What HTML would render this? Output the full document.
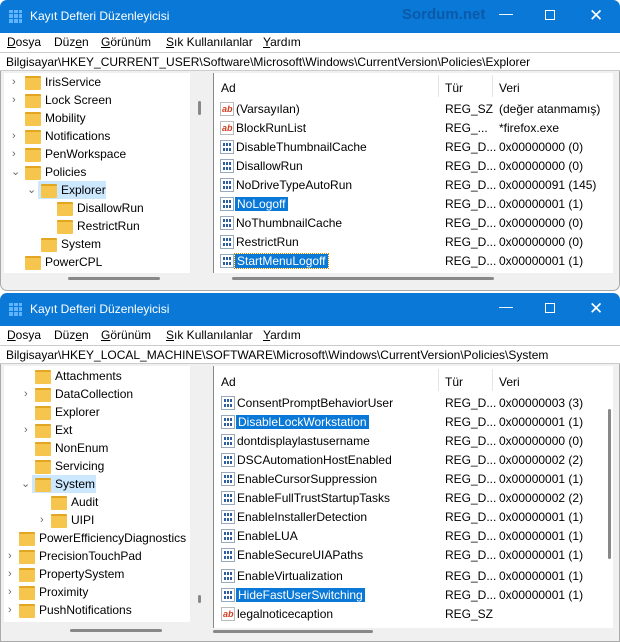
<!DOCTYPE html>
<html><head><meta charset="utf-8"><style>
*{margin:0;padding:0;box-sizing:border-box}
body{width:620px;height:642px;background:#fff;position:relative;overflow:hidden;font-family:"Liberation Sans","DejaVu Sans",sans-serif;font-size:12px;color:#000}
.a{position:absolute;white-space:nowrap;line-height:18px}
.title{position:absolute;left:0;width:620px;height:33px;background:#0a78d7;color:#fff;border-radius:7px 7px 0 0}
.title .tx{position:absolute;left:30px;top:9px;font-size:12px}
.title .ic{position:absolute;left:9px;top:10px;width:13px;height:13px;background:
linear-gradient(90deg,transparent 4px,#0a78d7 4px,#0a78d7 5px,transparent 5px,transparent 9px,#0a78d7 9px,#0a78d7 10px,transparent 10px),
linear-gradient(0deg,transparent 4px,#0a78d7 4px,#0a78d7 5px,transparent 5px,transparent 9px,#0a78d7 9px,#0a78d7 10px,transparent 10px),#5fb3ff}
.title .sd{position:absolute;left:402px;top:6px;font-weight:bold;font-size:15px;color:#0b5aa8}
.menu{position:absolute;left:0;width:620px;height:19px;background:#fff}
.menu span{position:absolute;top:2px}
.addr{position:absolute;left:0;width:620px;height:19px;border-top:1px solid #ccc;border-bottom:1px solid #ccc;background:#fff}
.addr span{position:absolute;left:6px;top:2px}
.panes{position:absolute;left:0;width:620px;background:#f0f0f0;border:1px solid #aaa;border-top:none;border-radius:0 0 7px 7px}
.lp{position:absolute;background:#fff}
.rp{position:absolute;background:#fff;border-left:1px solid #888}
.f::before{content:"";position:absolute;left:-20px;top:3px;width:16px;height:12px;background:#f6c54e;border-top:2px solid #e3a623;border-radius:1px}
.sel{background:#cce8ff}
.chev{position:absolute;color:#666;font-size:11px;line-height:18px}
.ico{position:absolute;left:-16px;top:2px;width:14px;height:14px;line-height:0;font-size:0}
.sz .ico{border:1px solid #bbb;background:#fff}
.sz .ico::after{content:"ab";position:absolute;left:1px;top:6px;font-size:9px;font-weight:bold;color:#d23b1f;line-height:0}
.dw .ico{border:1px solid #9ab;background:#fff}
.dw .ico::after{content:"";position:absolute;left:2px;top:2px;width:9px;height:3px;background:repeating-linear-gradient(90deg,#2c5d9c 0 2px,#fff 2px 3px)}
.dw .ico::before{content:"";position:absolute;left:2px;top:7px;width:9px;height:3px;background:repeating-linear-gradient(90deg,#2c5d9c 0 2px,#fff 2px 3px)}
.hl{background:#0a78d7;color:#fff;padding:0 2px;margin-left:-1px}
.hbar{position:absolute;height:3px;background:#888;border-radius:2px}
.vbar{position:absolute;width:3px;background:#888;border-radius:2px}
.btn{position:absolute;top:9px;color:#fff;font-size:14px}
</style></head><body>

<!-- WINDOW 1 -->
<div class="title" style="top:0"><div class="ic"></div><div class="tx">Kayıt Defteri Düzenleyicisi</div><div class="sd">Sordum.net</div>
<div class="btn" style="left:499px;top:5px">—</div>
<div style="position:absolute;left:545px;top:10px;width:10px;height:10px;border:1px solid #fff"></div>
<div class="btn" style="left:589px;top:6px;font-size:17px">✕</div></div>
<div class="menu" style="top:33px"><span style="left:7px"><u>D</u>osya</span><span style="left:54px">Düz<u>e</u>n</span><span style="left:101px"><u>G</u>örünüm</span><span style="left:166px"><u>S</u>ık Kullanılanlar</span><span style="left:263px"><u>Y</u>ardım</span></div>
<div class="addr" style="top:52px"><span>Bilgisayar\HKEY_CURRENT_USER\Software\Microsoft\Windows\CurrentVersion\Policies\Explorer</span></div>
<div class="panes" style="top:71px;height:220px">
<div class="lp" style="left:3px;top:2px;width:186px;height:200px"></div>
<div class="vbar" style="left:197px;top:30px;height:14px"></div>
<div class="hbar" style="left:67px;top:206px;width:92px"></div>
<div class="rp" style="left:212px;top:2px;width:400px;height:200px"></div>
<div class="hbar" style="left:231px;top:206px;width:262px"></div>
</div>
<div class="chev" style="left:12px;top:73px">›</div><div class="a f" style="left:45px;top:73px">IrisService</div>
<div class="chev" style="left:12px;top:91px">›</div><div class="a f" style="left:45px;top:91px">Lock Screen</div>
<div class="a f" style="left:45px;top:109px">Mobility</div>
<div class="chev" style="left:12px;top:127px">›</div><div class="a f" style="left:45px;top:127px">Notifications</div>
<div class="chev" style="left:12px;top:145px">›</div><div class="a f" style="left:45px;top:145px">PenWorkspace</div>
<div class="chev" style="left:11px;top:163px">⌄</div><div class="a f" style="left:45px;top:163px">Policies</div>
<div class="sel" style="position:absolute;left:38px;top:181px;width:68px;height:18px"></div>
<div class="chev" style="left:27px;top:181px">⌄</div><div class="a f" style="left:61px;top:181px">Explorer</div>
<div class="a f" style="left:77px;top:199px">DisallowRun</div>
<div class="a f" style="left:77px;top:217px">RestrictRun</div>
<div class="a f" style="left:61px;top:235px">System</div>
<div class="a f" style="left:45px;top:253px">PowerCPL</div>

<div class="a" style="left:221px;top:79px">Ad</div><div class="a" style="left:445px;top:79px">Tür</div><div class="a" style="left:499px;top:79px">Veri</div>
<div style="position:absolute;left:438px;top:75px;width:1px;height:22px;background:#e5e5e5"></div>
<div style="position:absolute;left:492px;top:75px;width:1px;height:22px;background:#e5e5e5"></div>

<div class="a sz" style="left:236px;top:100px"><i class="ico"></i>(Varsayılan)</div><div class="a" style="left:445px;top:100px">REG_SZ</div><div class="a" style="left:499px;top:100px">(değer atanmamış)</div>
<div class="a sz" style="left:236px;top:119px"><i class="ico"></i>BlockRunList</div><div class="a" style="left:445px;top:119px">REG_...</div><div class="a" style="left:499px;top:119px">*firefox.exe</div>
<div class="a dw" style="left:236px;top:138px"><i class="ico"></i>DisableThumbnailCache</div><div class="a" style="left:445px;top:138px">REG_D...</div><div class="a" style="left:499px;top:138px">0x00000000 (0)</div>
<div class="a dw" style="left:236px;top:157px"><i class="ico"></i>DisallowRun</div><div class="a" style="left:445px;top:157px">REG_D...</div><div class="a" style="left:499px;top:157px">0x00000000 (0)</div>
<div class="a dw" style="left:236px;top:176px"><i class="ico"></i>NoDriveTypeAutoRun</div><div class="a" style="left:445px;top:176px">REG_D...</div><div class="a" style="left:499px;top:176px">0x00000091 (145)</div>
<div class="a dw" style="left:236px;top:195px"><i class="ico"></i><span class="hl">NoLogoff</span></div><div class="a" style="left:445px;top:195px">REG_D...</div><div class="a" style="left:499px;top:195px">0x00000001 (1)</div>
<div class="a dw" style="left:236px;top:214px"><i class="ico"></i>NoThumbnailCache</div><div class="a" style="left:445px;top:214px">REG_D...</div><div class="a" style="left:499px;top:214px">0x00000000 (0)</div>
<div class="a dw" style="left:236px;top:233px"><i class="ico"></i>RestrictRun</div><div class="a" style="left:445px;top:233px">REG_D...</div><div class="a" style="left:499px;top:233px">0x00000000 (0)</div>
<div class="a dw" style="left:236px;top:252px"><i class="ico"></i><span class="hl" style="outline:1px dotted #c80">StartMenuLogoff</span></div><div class="a" style="left:445px;top:252px">REG_D...</div><div class="a" style="left:499px;top:252px">0x00000001 (1)</div>

<!-- WINDOW 2 -->
<div class="title" style="top:293px"><div class="ic"></div><div class="tx">Kayıt Defteri Düzenleyicisi</div>
<div class="btn" style="left:499px;top:5px">—</div>
<div style="position:absolute;left:545px;top:10px;width:10px;height:10px;border:1px solid #fff"></div>
<div class="btn" style="left:589px;top:6px;font-size:17px">✕</div></div>
<div class="menu" style="top:326px"><span style="left:7px"><u>D</u>osya</span><span style="left:54px">Düz<u>e</u>n</span><span style="left:101px"><u>G</u>örünüm</span><span style="left:166px"><u>S</u>ık Kullanılanlar</span><span style="left:263px"><u>Y</u>ardım</span></div>
<div class="addr" style="top:345px"><span>Bilgisayar\HKEY_LOCAL_MACHINE\SOFTWARE\Microsoft\Windows\CurrentVersion\Policies\System</span></div>
<div class="panes" style="top:364px;height:278px;border-radius:0">
<div class="lp" style="left:3px;top:2px;width:186px;height:256px"></div>
<div class="vbar" style="left:197px;top:231px;height:8px"></div>
<div class="hbar" style="left:69px;top:265px;width:92px"></div>
<div class="rp" style="left:212px;top:2px;width:400px;height:262px"></div>
<div class="vbar" style="left:607px;top:45px;height:150px"></div>
<div class="hbar" style="left:212px;top:266px;width:160px"></div>
</div>
<div class="a f" style="left:55px;top:367px">Attachments</div>
<div class="chev" style="left:24px;top:385px">›</div><div class="a f" style="left:55px;top:385px">DataCollection</div>
<div class="a f" style="left:55px;top:403px">Explorer</div>
<div class="chev" style="left:24px;top:421px">›</div><div class="a f" style="left:55px;top:421px">Ext</div>
<div class="a f" style="left:55px;top:439px">NonEnum</div>
<div class="a f" style="left:55px;top:457px">Servicing</div>
<div class="sel" style="position:absolute;left:32px;top:475px;width:64px;height:18px"></div>
<div class="chev" style="left:21px;top:475px">⌄</div><div class="a f" style="left:55px;top:475px">System</div>
<div class="a f" style="left:71px;top:493px">Audit</div>
<div class="chev" style="left:40px;top:511px">›</div><div class="a f" style="left:71px;top:511px">UIPI</div>
<div class="a f" style="left:39px;top:529px">PowerEfficiencyDiagnostics</div>
<div class="chev" style="left:8px;top:547px">›</div><div class="a f" style="left:39px;top:547px">PrecisionTouchPad</div>
<div class="chev" style="left:8px;top:565px">›</div><div class="a f" style="left:39px;top:565px">PropertySystem</div>
<div class="chev" style="left:8px;top:583px">›</div><div class="a f" style="left:39px;top:583px">Proximity</div>
<div class="chev" style="left:8px;top:601px">›</div><div class="a f" style="left:39px;top:601px">PushNotifications</div>

<div class="a" style="left:221px;top:373px">Ad</div><div class="a" style="left:445px;top:373px">Tür</div><div class="a" style="left:499px;top:373px">Veri</div>
<div style="position:absolute;left:438px;top:369px;width:1px;height:22px;background:#e5e5e5"></div>
<div style="position:absolute;left:492px;top:369px;width:1px;height:22px;background:#e5e5e5"></div>

<div class="a dw" style="left:237px;top:394px"><i class="ico"></i>ConsentPromptBehaviorUser</div><div class="a" style="left:445px;top:394px">REG_D...</div><div class="a" style="left:499px;top:394px">0x00000003 (3)</div>
<div class="a dw" style="left:237px;top:413px"><i class="ico"></i><span class="hl">DisableLockWorkstation</span></div><div class="a" style="left:445px;top:413px">REG_D...</div><div class="a" style="left:499px;top:413px">0x00000001 (1)</div>
<div class="a dw" style="left:237px;top:432px"><i class="ico"></i>dontdisplaylastusername</div><div class="a" style="left:445px;top:432px">REG_D...</div><div class="a" style="left:499px;top:432px">0x00000000 (0)</div>
<div class="a dw" style="left:237px;top:451px"><i class="ico"></i>DSCAutomationHostEnabled</div><div class="a" style="left:445px;top:451px">REG_D...</div><div class="a" style="left:499px;top:451px">0x00000002 (2)</div>
<div class="a dw" style="left:237px;top:470px"><i class="ico"></i>EnableCursorSuppression</div><div class="a" style="left:445px;top:470px">REG_D...</div><div class="a" style="left:499px;top:470px">0x00000001 (1)</div>
<div class="a dw" style="left:237px;top:489px"><i class="ico"></i>EnableFullTrustStartupTasks</div><div class="a" style="left:445px;top:489px">REG_D...</div><div class="a" style="left:499px;top:489px">0x00000002 (2)</div>
<div class="a dw" style="left:237px;top:508px"><i class="ico"></i>EnableInstallerDetection</div><div class="a" style="left:445px;top:508px">REG_D...</div><div class="a" style="left:499px;top:508px">0x00000001 (1)</div>
<div class="a dw" style="left:237px;top:527px"><i class="ico"></i>EnableLUA</div><div class="a" style="left:445px;top:527px">REG_D...</div><div class="a" style="left:499px;top:527px">0x00000001 (1)</div>
<div class="a dw" style="left:237px;top:546px"><i class="ico"></i>EnableSecureUIAPaths</div><div class="a" style="left:445px;top:546px">REG_D...</div><div class="a" style="left:499px;top:546px">0x00000001 (1)</div>
<div class="a dw" style="left:237px;top:567px"><i class="ico"></i>EnableVirtualization</div><div class="a" style="left:445px;top:567px">REG_D...</div><div class="a" style="left:499px;top:567px">0x00000001 (1)</div>
<div class="a dw" style="left:237px;top:586px"><i class="ico"></i><span class="hl">HideFastUserSwitching</span></div><div class="a" style="left:445px;top:586px">REG_D...</div><div class="a" style="left:499px;top:586px">0x00000001 (1)</div>
<div class="a sz" style="left:237px;top:605px"><i class="ico"></i>legalnoticecaption</div><div class="a" style="left:445px;top:605px">REG_SZ</div>
</body></html>
